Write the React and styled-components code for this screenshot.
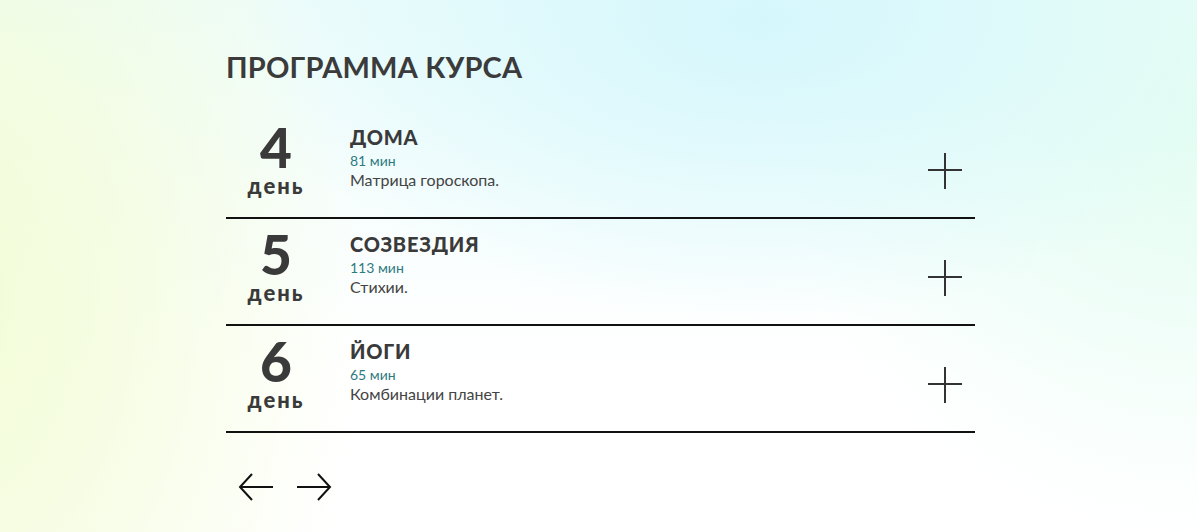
import React from "react";
import styled, { createGlobalStyle } from "styled-components";

const Global = createGlobalStyle`
  html, body { margin: 0; padding: 0; }
  body {
    font-family: Lato, "Noto Sans", sans-serif;
    color: #3a3a3a;
  }
`;

const Page = styled.div`
  width: 1197px;
  height: 532px;
  overflow: hidden;
  box-sizing: border-box;
  padding: 49px 0 0 226px;
  background:
    radial-gradient(ellipse 520px 300px at 760px 20px, #d5f7fc 0%, rgba(213,247,252,0.6) 45%, rgba(213,247,252,0) 100%),
    radial-gradient(ellipse 420px 420px at 1197px 120px, #e4fdf2 0%, rgba(228,253,242,0) 100%),
    radial-gradient(ellipse 420px 620px at -60px 300px, #f2fcd6 0%, rgba(242,252,214,0.7) 40%, rgba(242,252,214,0) 100%),
    linear-gradient(180deg, #eefcfb 0%, #ffffff 70%);
`;

const Section = styled.section`
  width: 749px;
`;

const Title = styled.h2`
  margin: 0 0 27px;
  font-size: 29px;
  line-height: 36px;
  font-weight: 700;
  letter-spacing: 0.2px;
  color: #3b3b3b;
`;

const List = styled.div`
  display: flex;
  flex-direction: column;
`;

const Row = styled.div`
  display: flex;
  align-items: flex-start;
  height: 105px;
  border-bottom: 2px solid #111;
`;

const Day = styled.div`
  width: 100px;
  flex: none;
  margin-right: 24px;
  display: flex;
  flex-direction: column;
  align-items: center;
  padding-top: 10px;
`;

const DayNum = styled.div`
  font-size: 55px;
  line-height: 50px;
  font-weight: 900;
  color: #3a3a3a;
`;

const DayLabel = styled.div`
  margin-top: 2px;
  font-size: 22px;
  line-height: 24px;
  font-weight: 900;
  letter-spacing: 2px;
  color: #3a3a3a;
`;

const Info = styled.div`
  flex: 1;
  padding-top: 14px;
  display: flex;
  flex-direction: column;
`;

const Name = styled.div`
  font-size: 20px;
  line-height: 22px;
  font-weight: 900;
  letter-spacing: 0.8px;
  color: #3a3a3a;
`;

const Duration = styled.div`
  margin-top: 4px;
  font-size: 14px;
  line-height: 18px;
  color: #2d7a80;
`;

const Desc = styled.div`
  font-size: 16px;
  line-height: 20px;
  color: #444;
`;

const PlusButton = styled.button`
  flex: none;
  align-self: flex-start;
  margin: 40px 12px 0 0;
  width: 36px;
  height: 38px;
  padding: 0;
  border: 0;
  background: none;
  cursor: pointer;
  display: flex;
  align-items: center;
  justify-content: center;
`;

const Nav = styled.div`
  display: flex;
  gap: 22px;
  margin-top: 39px;
  padding-left: 12px;
`;

const ArrowButton = styled.button`
  width: 36px;
  height: 30px;
  padding: 0;
  border: 0;
  background: none;
  cursor: pointer;
  display: flex;
  align-items: center;
  justify-content: center;
`;

const Plus = () => (
  <svg width="36" height="38" viewBox="0 0 36 38">
    <path d="M18 1V37M1 18H35" stroke="#333" strokeWidth="2" fill="none" />
  </svg>
);

const Arrow = ({ dir }) => (
  <svg width="36" height="30" viewBox="0 0 36 30">
    {dir === "left" ? (
      <path d="M35 15H2M14 2L2 15L14 28" stroke="#111" strokeWidth="2" fill="none" />
    ) : (
      <path d="M1 15H34M22 2L34 15L22 28" stroke="#111" strokeWidth="2" fill="none" />
    )}
  </svg>
);

const days = [
  { n: 4, name: "ДОМА", dur: "81 мин", desc: "Матрица гороскопа." },
  { n: 5, name: "СОЗВЕЗДИЯ", dur: "113 мин", desc: "Стихии." },
  { n: 6, name: "ЙОГИ", dur: "65 мин", desc: "Комбинации планет." },
];

export default function App() {
  return (
    <>
      <Global />
      <Page>
        <Section>
          <Title>ПРОГРАММА КУРСА</Title>
          <List>
            {days.map((d) => (
              <Row key={d.n}>
                <Day>
                  <DayNum>{d.n}</DayNum>
                  <DayLabel>день</DayLabel>
                </Day>
                <Info>
                  <Name>{d.name}</Name>
                  <Duration>{d.dur}</Duration>
                  <Desc>{d.desc}</Desc>
                </Info>
                <PlusButton aria-label="Раскрыть">
                  <Plus />
                </PlusButton>
              </Row>
            ))}
          </List>
          <Nav>
            <ArrowButton aria-label="Назад">
              <Arrow dir="left" />
            </ArrowButton>
            <ArrowButton aria-label="Вперёд">
              <Arrow dir="right" />
            </ArrowButton>
          </Nav>
        </Section>
      </Page>
    </>
  );
}
